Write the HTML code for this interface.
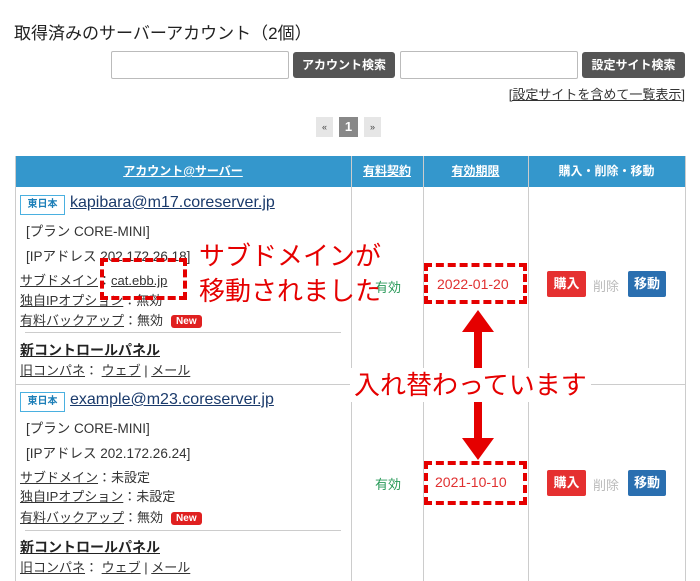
<!DOCTYPE html>
<html><head><meta charset="utf-8"><style>
*{margin:0;padding:0;box-sizing:border-box}
body{width:700px;height:581px;overflow:hidden;background:#fff;font-family:"Liberation Sans","Noto Sans CJK JP",sans-serif;color:#222;position:relative}
.a{position:absolute;white-space:nowrap}
.u{text-decoration:underline}
.inp{position:absolute;height:28px;border:1px solid #bbb;border-radius:2px;background:#fff}
.btn{position:absolute;height:26px;background:#555;color:#fff;font-size:12px;font-weight:bold;border-radius:3px;line-height:26px;text-align:center}
.vl{position:absolute;top:156px;bottom:0;width:1px;background:#ccc}
.hd{position:absolute;top:156px;height:31px;background:#3497cc;color:#fff;font-size:12px;font-weight:bold;line-height:31px;text-align:center}
.badge{position:absolute;width:45px;height:20px;border:1px solid #4ab0e0;color:#1d7fb8;font-size:10px;font-weight:bold;text-align:center;line-height:18px}
.em{font-size:16px;color:#1a3a6b;text-decoration:underline;font-weight:500}
.t{font-size:13px;color:#333}
.new{display:inline-block;background:#e02020;color:#fff;font-size:10px;font-weight:bold;border-radius:3px;padding:1px 5px;margin-left:8px;vertical-align:1px}
.dash{position:absolute;border:4px dashed #e50000}
.red{color:#e50000;font-size:26px}
.b{position:absolute;height:26px;color:#fff;font-size:13px;font-weight:bold;line-height:26px;text-align:center;border-radius:2px}
</style></head><body>
<div class="a" style="left:14px;top:19px;font-size:17px">取得済みのサーバーアカウント（2個）</div>
<div class="inp" style="left:111px;top:51px;width:178px"></div>
<div class="btn" style="left:293px;top:52px;width:102px">アカウント検索</div>
<div class="inp" style="left:400px;top:51px;width:178px"></div>
<div class="btn" style="left:582px;top:52px;width:103px">設定サイト検索</div>
<div class="a u" style="right:15px;top:84px;font-size:13px;color:#333">[設定サイトを含めて一覧表示]</div>
<div class="a" style="left:316px;top:117px;width:17px;height:20px;background:#e6e6e6;font-size:9px;text-align:center;line-height:20px;color:#444">«</div>
<div class="a" style="left:339px;top:117px;width:19px;height:20px;background:#888;color:#fff;font-size:13px;font-weight:bold;text-align:center;line-height:20px">1</div>
<div class="a" style="left:364px;top:117px;width:17px;height:20px;background:#e6e6e6;font-size:9px;text-align:center;line-height:20px;color:#444">»</div>

<div class="hd" style="left:15px;width:670px"></div>
<div class="hd u" style="left:15px;width:336px">アカウント@サーバー</div>
<div class="hd u" style="left:351px;width:72px">有料契約</div>
<div class="hd u" style="left:423px;width:105px">有効期限</div>
<div class="hd" style="left:528px;width:157px">購入・削除・移動</div>
<div class="vl" style="left:15px"></div><div class="vl" style="left:351px"></div><div class="vl" style="left:423px"></div><div class="vl" style="left:528px"></div><div class="vl" style="left:685px"></div>
<div class="a" style="left:15px;top:384px;width:671px;height:1px;background:#ccc"></div>

<!-- row1 -->
<div class="badge" style="left:20px;top:195px">東日本</div>
<div class="a em" style="left:70px;top:194px">kapibara@m17.coreserver.jp</div>
<div class="a t" style="left:26px;top:220px;font-size:13.5px">[プラン CORE-MINI]</div>
<div class="a t" style="left:26px;top:245px;font-size:13.5px">[IPアドレス 202.172.26.18]</div>
<div class="a t" style="left:20px;top:270px"><span class="u">サブドメイン</span>：<span class="u">cat.ebb.jp</span></div>
<div class="a t" style="left:20px;top:290px"><span class="u">独自IPオプション</span>：無効</div>
<div class="a t" style="left:20px;top:310px"><span class="u">有料バックアップ</span>：無効<span class="new">New</span></div>
<div class="a" style="left:25px;top:332px;width:316px;height:1px;background:#ccc"></div>
<div class="a u" style="left:20px;top:340px;font-size:14px;font-weight:bold">新コントロールパネル</div>
<div class="a t" style="left:20px;top:360px"><span class="u">旧コンパネ</span>： <span class="u">ウェブ</span> | <span class="u">メール</span></div>
<div class="a" style="left:375px;top:277px;font-size:13px;color:#2a9a5a">有効</div>
<div class="a" style="left:437px;top:276px;font-size:14px;color:#e03030">2022-01-20</div>
<div class="b" style="left:547px;top:271px;width:39px;background:#e53030">購入</div>
<div class="a" style="left:593px;top:276px;font-size:13px;color:#bbb">削除</div>
<div class="b" style="left:628px;top:271px;width:38px;background:#2a6fb0">移動</div>

<!-- row2 -->
<div class="badge" style="left:20px;top:392px">東日本</div>
<div class="a em" style="left:70px;top:391px">example@m23.coreserver.jp</div>
<div class="a t" style="left:26px;top:417px;font-size:13.5px">[プラン CORE-MINI]</div>
<div class="a t" style="left:26px;top:442px;font-size:13.5px">[IPアドレス 202.172.26.24]</div>
<div class="a t" style="left:20px;top:467px"><span class="u">サブドメイン</span>：未設定</div>
<div class="a t" style="left:20px;top:486px"><span class="u">独自IPオプション</span>：未設定</div>
<div class="a t" style="left:20px;top:507px"><span class="u">有料バックアップ</span>：無効<span class="new">New</span></div>
<div class="a" style="left:25px;top:530px;width:316px;height:1px;background:#ccc"></div>
<div class="a u" style="left:20px;top:537px;font-size:14px;font-weight:bold">新コントロールパネル</div>
<div class="a t" style="left:20px;top:557px"><span class="u">旧コンパネ</span>： <span class="u">ウェブ</span> | <span class="u">メール</span></div>
<div class="a" style="left:375px;top:474px;font-size:13px;color:#2a9a5a">有効</div>
<div class="a" style="left:435px;top:474px;font-size:14px;color:#e03030">2021-10-10</div>
<div class="b" style="left:547px;top:470px;width:39px;background:#e53030">購入</div>
<div class="a" style="left:593px;top:475px;font-size:13px;color:#bbb">削除</div>
<div class="b" style="left:628px;top:470px;width:38px;background:#2a6fb0">移動</div>

<!-- annotations -->
<div class="dash" style="left:100px;top:258px;width:87px;height:42px"></div>
<div class="a red" style="left:199px;top:240px;line-height:32px">サブドメインが</div>
<div class="a red" style="left:199px;top:275px;line-height:32px">移動されました</div>
<div class="dash" style="left:424px;top:263px;width:103px;height:41px"></div>
<div class="dash" style="left:424px;top:461px;width:103px;height:44px"></div>
<svg class="a" style="left:460px;top:310px" width="36" height="150">
<polygon points="18,0 34,22 22,22 22,58 14,58 14,22 2,22" fill="#e50000"/>
<polygon points="18,150 34,128 22,128 22,92 14,92 14,128 2,128" fill="#e50000"/>
</svg>
<div class="a red" style="left:350px;top:368px;line-height:34px;background:#fff;padding:0 4px">入れ替わっています</div>
</body></html>
